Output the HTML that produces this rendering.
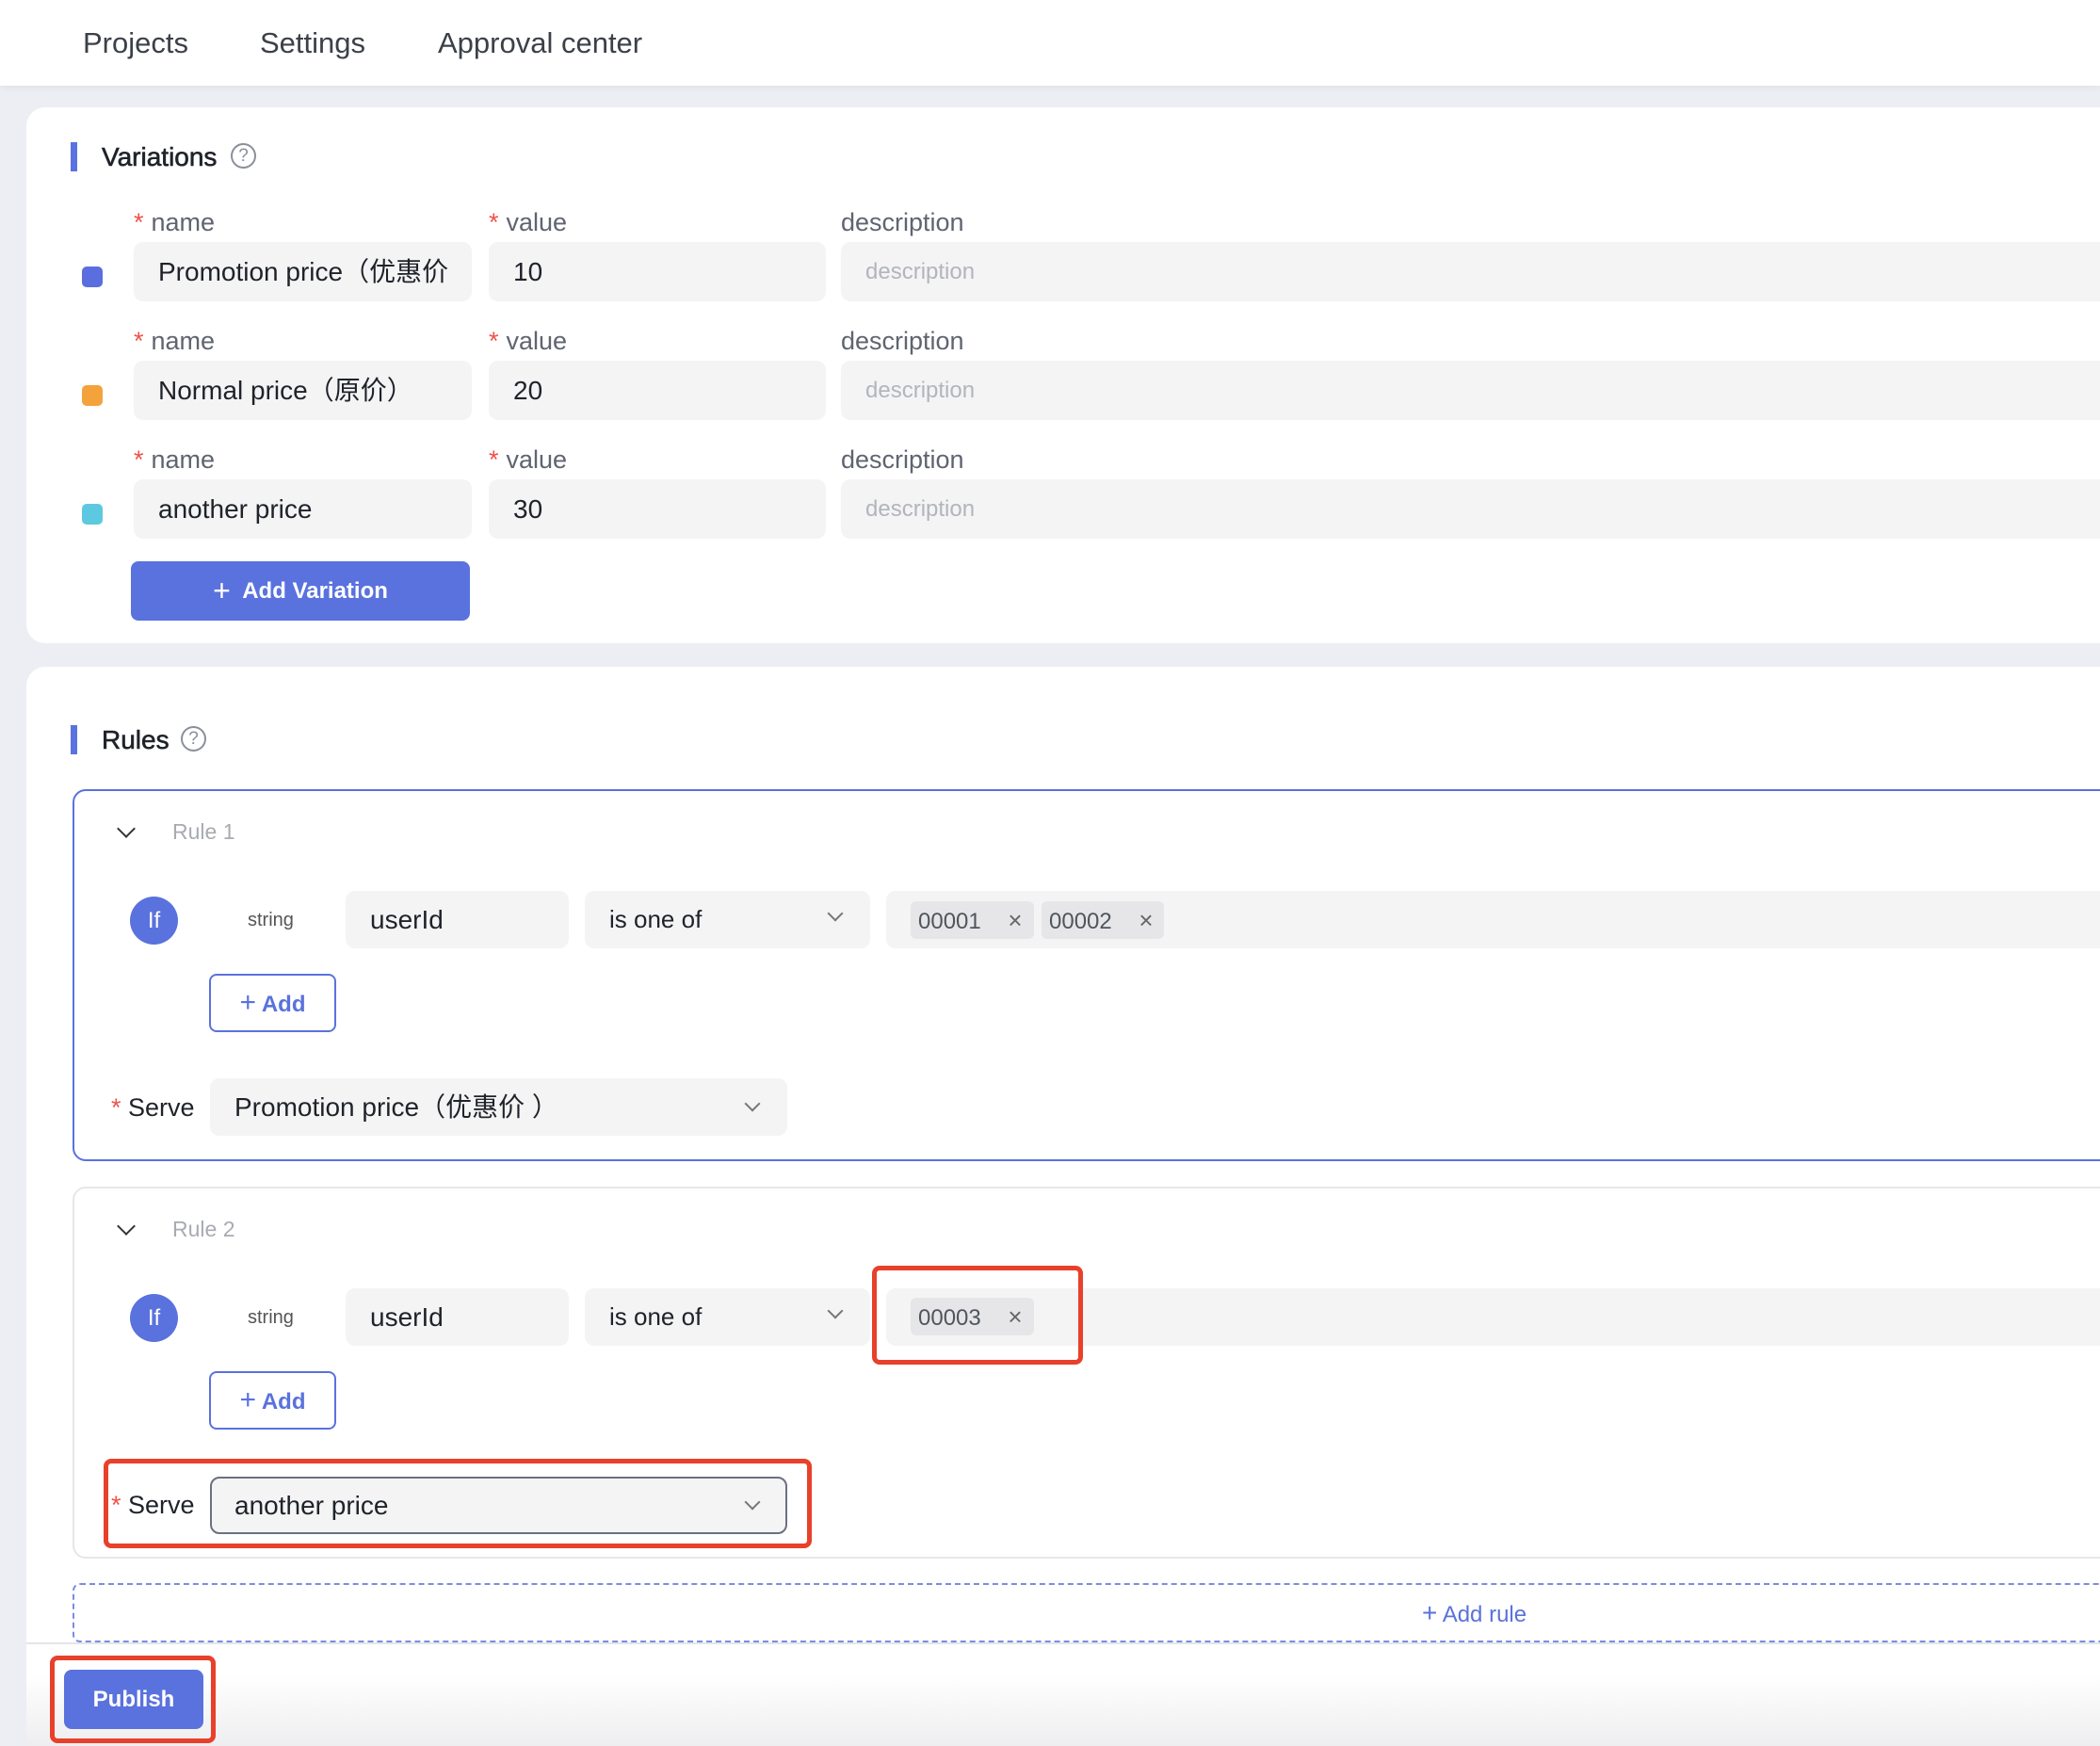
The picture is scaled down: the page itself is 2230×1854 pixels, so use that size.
<!DOCTYPE html>
<html><head><meta charset="utf-8"><style>
*{box-sizing:border-box;margin:0;padding:0}
body{width:2230px;height:1854px;position:relative;overflow:hidden;background:#eceef3;font-family:"Liberation Sans","Noto Sans CJK SC",sans-serif;color:#1f2329}
.a{position:absolute}
.hdr{left:0;top:0;width:2230px;height:91px;background:#fff;box-shadow:0 2px 8px rgba(0,0,0,.06)}
.nav{top:28px;font-size:31px;color:#3c4048}
.card{background:#fff;border-radius:20px}
.bar{width:7px;height:31px;background:#5a72e0}
.title{font-size:28px;color:#1f2329;-webkit-text-stroke:0.6px #1f2329}
.q{width:27px;height:27px;border:2px solid #8a8f99;border-radius:50%;font-size:19px;color:#8a8f99;text-align:center;line-height:23px}
.lbl{font-size:27px;color:#5f6470}
.lbl b{color:#f0524a;font-weight:normal;margin-right:8px}
.inp{background:#f4f4f5;border-radius:10px;font-size:28px;line-height:63px;padding-left:26px;height:63px;color:#1f2329}
.ph{color:#b2b5bb;font-size:24px}
.sq{width:22px;height:22px;border-radius:5px}
.btn{background:#5a72de;color:#fff;border-radius:8px;font-weight:bold;text-align:center}
.obtn{border:2px solid #5a72de;color:#5a72de;border-radius:8px;font-weight:bold;text-align:center;background:#fff;font-size:24px;line-height:57px}
.rule{border-radius:14px}
.chev{width:14px;height:14px;border-right:2.5px solid #333;border-bottom:2.5px solid #333;transform:rotate(45deg)}
.chg{width:12px;height:12px;border-right:2px solid #777;border-bottom:2px solid #777;transform:rotate(45deg)}
.if{width:51px;height:51px;border-radius:50%;background:#5a72de;color:#fff;font-size:24px;text-align:center;line-height:51px}
.tag{background:#e6e6e8;border-radius:6px;height:40px;font-size:24px;line-height:40px;padding-left:8px;color:#50555e}
.x{color:#666;font-size:26px}
.red{border:5px solid #e8402a;border-radius:8px}
</style></head><body>
<div class="a hdr"></div>
<div class="a nav" style="left:88px">Projects</div>
<div class="a nav" style="left:276px">Settings</div>
<div class="a nav" style="left:465px">Approval center</div>

<div class="a card" style="left:28px;top:114px;width:2230px;height:569px"></div>
<div class="a bar" style="left:75px;top:151px"></div>
<div class="a title" style="left:108px;top:151px">Variations</div>
<div class="a q" style="left:245px;top:152px">?</div>

<div class="a lbl" style="left:142px;top:221px"><b>*</b>name</div>
<div class="a lbl" style="left:519px;top:221px"><b>*</b>value</div>
<div class="a lbl" style="left:893px;top:221px">description</div>
<div class="a sq" style="left:87px;top:283px;background:#5a6ee0"></div>
<div class="a inp" style="left:142px;top:257px;width:359px;overflow:hidden;white-space:nowrap">Promotion price（优惠价</div>
<div class="a inp" style="left:519px;top:257px;width:358px">10</div>
<div class="a inp ph" style="left:893px;top:257px;width:1400px">description</div>

<div class="a lbl" style="left:142px;top:347px"><b>*</b>name</div>
<div class="a lbl" style="left:519px;top:347px"><b>*</b>value</div>
<div class="a lbl" style="left:893px;top:347px">description</div>
<div class="a sq" style="left:87px;top:409px;background:#f4a23c"></div>
<div class="a inp" style="left:142px;top:383px;width:359px">Normal price（原价）</div>
<div class="a inp" style="left:519px;top:383px;width:358px">20</div>
<div class="a inp ph" style="left:893px;top:383px;width:1400px">description</div>

<div class="a lbl" style="left:142px;top:473px"><b>*</b>name</div>
<div class="a lbl" style="left:519px;top:473px"><b>*</b>value</div>
<div class="a lbl" style="left:893px;top:473px">description</div>
<div class="a sq" style="left:87px;top:535px;background:#5cc9e0"></div>
<div class="a inp" style="left:142px;top:509px;width:359px">another price</div>
<div class="a inp" style="left:519px;top:509px;width:358px">30</div>
<div class="a inp ph" style="left:893px;top:509px;width:1400px">description</div>

<div class="a btn" style="left:139px;top:596px;width:360px;height:63px;font-size:24px;line-height:63px"><span style="font-weight:normal;font-size:32px;vertical-align:-3px">+</span>&nbsp; Add Variation</div>

<div class="a card" style="left:28px;top:708px;width:2230px;height:1100px"></div>
<div class="a bar" style="left:75px;top:770px"></div>
<div class="a title" style="left:108px;top:770px">Rules</div>
<div class="a q" style="left:192px;top:771px">?</div>

<div class="a rule" style="left:77px;top:838px;width:2200px;height:395px;border:2px solid #5a72de"></div>
<div class="a chev" style="left:127px;top:873px"></div>
<div class="a" style="left:183px;top:870px;font-size:23px;color:#a8abb2">Rule 1</div>
<div class="a if" style="left:138px;top:952px">If</div>
<div class="a" style="left:263px;top:966px;font-size:20px;color:#555">string</div>
<div class="a inp" style="left:367px;top:946px;width:237px;height:61px;line-height:61px">userId</div>
<div class="a inp" style="left:621px;top:946px;width:303px;height:61px;line-height:61px;font-size:26px">is one of</div>
<div class="a chg" style="left:881px;top:964px"></div>
<div class="a inp" style="left:941px;top:946px;width:1400px;height:61px"></div>
<div class="a tag" style="left:967px;top:957px;width:131px">00001 <span class="x" style="margin-left:22px">×</span></div>
<div class="a tag" style="left:1106px;top:957px;width:130px">00002 <span class="x" style="margin-left:22px">×</span></div>
<div class="a obtn" style="left:222px;top:1034px;width:135px;height:62px"><span style="font-weight:normal;font-size:30px">+</span> Add</div>
<div class="a" style="left:118px;top:1161px;font-size:27px"><span style="color:#f0524a">*</span> Serve</div>
<div class="a inp" style="left:223px;top:1145px;width:613px;height:61px;line-height:61px">Promotion price（优惠价 ）</div>
<div class="a chg" style="left:793px;top:1166px"></div>

<div class="a rule" style="left:77px;top:1260px;width:2200px;height:395px;border:2px solid #e6e7ea"></div>
<div class="a chev" style="left:127px;top:1295px"></div>
<div class="a" style="left:183px;top:1292px;font-size:23px;color:#a8abb2">Rule 2</div>
<div class="a if" style="left:138px;top:1374px">If</div>
<div class="a" style="left:263px;top:1388px;font-size:20px;color:#555">string</div>
<div class="a inp" style="left:367px;top:1368px;width:237px;height:61px;line-height:61px">userId</div>
<div class="a inp" style="left:621px;top:1368px;width:303px;height:61px;line-height:61px;font-size:26px">is one of</div>
<div class="a chg" style="left:881px;top:1386px"></div>
<div class="a inp" style="left:941px;top:1368px;width:1400px;height:61px"></div>
<div class="a tag" style="left:967px;top:1378px;width:131px">00003 <span class="x" style="margin-left:22px">×</span></div>
<div class="a red" style="left:926px;top:1344px;width:224px;height:105px"></div>
<div class="a obtn" style="left:222px;top:1456px;width:135px;height:62px"><span style="font-weight:normal;font-size:30px">+</span> Add</div>
<div class="a" style="left:118px;top:1583px;font-size:27px"><span style="color:#f0524a">*</span> Serve</div>
<div class="a inp" style="left:223px;top:1568px;width:613px;height:61px;line-height:57px;padding-left:24px;border:2px solid #6c7080">another price</div>
<div class="a chg" style="left:793px;top:1589px"></div>
<div class="a red" style="left:110px;top:1549px;width:752px;height:95px"></div>

<div class="a" style="left:77px;top:1681px;width:2200px;height:63px;border:2px dashed #7a8ce6;border-radius:8px"></div>
<div class="a" style="left:1510px;top:1697px;font-size:24px;color:#5a72de"><span style="font-size:28px">+</span> Add rule</div>

<div class="a" style="left:28px;top:1744px;width:2210px;height:110px;background:linear-gradient(#fff 30%,#eeeef0);border-top:2px solid #e4e5e8"></div>
<div class="a btn" style="left:68px;top:1773px;width:148px;height:63px;font-size:24px;line-height:63px">Publish</div>
<div class="a red" style="left:53px;top:1758px;width:176px;height:93px"></div>
</body></html>
